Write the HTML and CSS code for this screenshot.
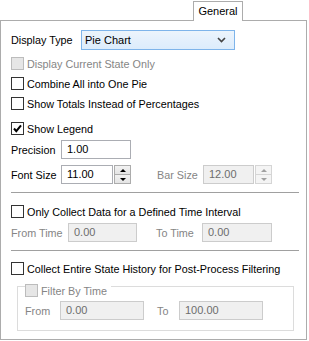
FILE: index.html
```html
<!DOCTYPE html>
<html>
<head>
<meta charset="utf-8">
<link rel="stylesheet" href="styles.css">
</head>
<body>
<div class="tabs">
  <div class="tab">General</div>
</div>
<div class="panel">
  <div class="row r-display">
    <span class="lbl w70">Display Type</span>
    <div class="select">
      <span>Pie Chart</span>
      <svg class="chev" width="9" height="6" viewBox="0 0 9 6"><path d="M1 1 L4.5 4.5 L8 1" fill="none" stroke="#444" stroke-width="1.6"/></svg>
    </div>
  </div>
  <div class="cb-row m8 dis"><span class="cb dcb"></span><span>Display Current State Only</span></div>
  <div class="cb-row m7"><span class="cb"></span><span>Combine All into One Pie</span></div>
  <div class="cb-row m7"><span class="cb"></span><span>Show Totals Instead of Percentages</span></div>
  <div class="cb-row m12"><span class="cb"><svg width="11" height="11" viewBox="0 0 11 11"><path d="M2 5.5 L4.3 8.2 L9 2.3" fill="none" stroke="#000" stroke-width="2"/></svg></span><span>Show Legend</span></div>
  <div class="row m5">
    <span class="lbl w50">Precision</span>
    <div class="input w70">1.00</div>
  </div>
  <div class="row m6">
    <span class="lbl w50">Font Size</span>
    <div class="input w52">11.00</div>
    <div class="spin">
      <span class="sbtn"><i class="up"></i></span>
      <span class="sbtn"><i class="dn"></i></span>
    </div>
    <span class="lbl dis w46 ml26">Bar Size</span>
    <div class="input w51 disin">12.00</div>
    <div class="spin dspin">
      <span class="sbtn"><i class="up"></i></span>
      <span class="sbtn"><i class="dn"></i></span>
    </div>
  </div>
  <div class="sep m8"></div>
  <div class="cb-row m12"><span class="cb"></span><span>Only Collect Data for a Defined Time Interval</span></div>
  <div class="row m5">
    <span class="lbl dis w57">From Time</span>
    <div class="input w69 disin">0.00</div>
    <span class="lbl dis w46 ml19">To Time</span>
    <div class="input w70 disin">0.00</div>
  </div>
  <div class="sep m8"></div>
  <div class="cb-row m11"><span class="cb"></span><span>Collect Entire State History for Post-Process Filtering</span></div>
  <div class="group">
    <div class="ghead dis"><span class="cb dcb"></span><span>Filter By Time</span></div>
    <div class="row gm">
      <span class="lbl dis w35">From</span>
      <div class="input w84 disin">0.00</div>
      <span class="lbl dis w22 ml13">To</span>
      <div class="input w84 disin">100.00</div>
    </div>
  </div>
</div>
</body>
</html>
```

FILE: styles.css
```css
html, body {
  margin: 0;
  padding: 0;
  background: #ffffff;
}
body {
  font-family: "Liberation Sans", Arial, sans-serif;
  font-size: 10.8px;
  color: #000;
  width: 309px;
  height: 341px;
  overflow: hidden;
}
.tabs {
  display: flex;
  justify-content: flex-end;
  padding-right: 66px;
  padding-top: 1px;
  height: 19px;
  position: relative;
  z-index: 1;
}
.tab {
  box-sizing: border-box;
  width: 50px;
  height: 20px;
  border: 1px solid #acacac;
  border-bottom: none;
  background: #fff;
  text-align: center;
  line-height: 18px;
  font-size: 11px;
}
.panel {
  box-sizing: border-box;
  width: 307px;
  height: 320px;
  border: 1px solid #acacac;
  background: #fff;
  padding: 0 7px 0 10px;
}
.row {
  display: flex;
  align-items: center;
  height: 19px;
}
.r-display { margin-top: 9px; }
.m5 { margin-top: 5px; }
.m6 { margin-top: 6px; }
.m7 { margin-top: 7px; }
.m8 { margin-top: 8px; }
.m11 { margin-top: 11px; }
.m12 { margin-top: 12px; }
.lbl { flex: none; white-space: nowrap; }
.w70 { width: 70px; }
.w50 { width: 50px; }
.w46 { width: 46px; }
.w57 { width: 57px; }
.w35 { width: 35px; }
.w22 { width: 22px; }
.ml26 { margin-left: 26px; }
.ml19 { margin-left: 19px; }
.ml13 { margin-left: 13px; }
.select {
  box-sizing: border-box;
  width: 154px;
  height: 20px;
  border: 1px solid #7eb4ea;
  background: linear-gradient(#ecf4fc, #dcecfc);
  display: flex;
  align-items: center;
  justify-content: space-between;
  padding: 0 8px 0 3px;
  font-size: 11px;
}
.chev { display: block; }
.cb-row {
  display: flex;
  align-items: center;
  height: 13px;
  white-space: nowrap;
}
.cb {
  box-sizing: border-box;
  width: 13px;
  height: 13px;
  border: 1px solid #333;
  background: #fff;
  margin-right: 3px;
  flex: none;
  display: flex;
  align-items: center;
  justify-content: center;
}
.cb svg { display: block; }
.dcb {
  background: #e6e6e6;
  border-color: #bcbcbc;
}
.dis { color: #858585; }
.input {
  box-sizing: border-box;
  height: 19px;
  border: 1px solid #abadb3;
  background: #fff;
  padding: 0 0 0 5px;
  line-height: 17px;
  flex: none;
  font-size: 11px;
}
.disin {
  background: #f0f0f0;
  border-color: #cccccc;
  color: #6d6d6d;
}
.w52 { width: 52px; }
.w51 { width: 51px; }
.w69 { width: 69px; }
.w84 { width: 84px; }
.spin {
  box-sizing: border-box;
  width: 17px;
  height: 19px;
  margin-left: 1px;
  display: flex;
  flex-direction: column;
  flex: none;
}
.sbtn {
  box-sizing: border-box;
  flex: 1;
  border: 1px solid #acacac;
  background: linear-gradient(#f2f2f2, #e4e4e4);
  display: flex;
  align-items: center;
  justify-content: center;
}
.sbtn + .sbtn { border-top: none; }
.sbtn i {
  width: 0;
  height: 0;
  border-left: 3px solid transparent;
  border-right: 3px solid transparent;
}
.sbtn i.up { border-bottom: 3px solid #000; }
.sbtn i.dn { border-top: 3px solid #000; }
.dspin .sbtn { border-color: #d5d5d5; background: #f4f4f4; }
.dspin .sbtn i.up { border-bottom-color: #a0a0a0; }
.dspin .sbtn i.dn { border-top-color: #a0a0a0; }
.sep {
  height: 1px;
  width: 288px;
  background: #a0a0a0;
}
.group {
  box-sizing: border-box;
  margin: 11px 0 0 6px;
  width: 277px;
  height: 45px;
  border: 1px solid #dcdcdc;
}
.ghead {
  display: inline-flex;
  align-items: center;
  height: 13px;
  margin: -4px 0 0 7px;
  padding-right: 4px;
  background: #fff;
  white-space: nowrap;
}
.gm { margin-top: 2px; margin-left: 7px; }
```
